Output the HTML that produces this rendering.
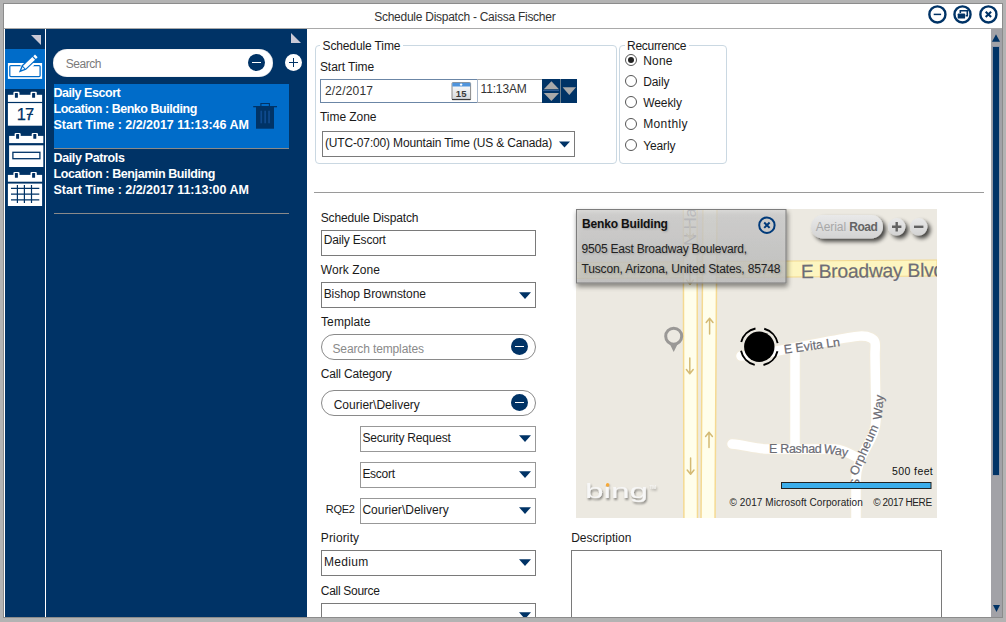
<!DOCTYPE html>
<html><head><meta charset="utf-8"><title>Schedule Dispatch</title>
<style>
html,body{margin:0;padding:0}
body{width:1006px;height:622px;position:relative;overflow:hidden;background:#b3b3b3;font-family:"Liberation Sans",sans-serif;font-size:12px}
.a{position:absolute;box-sizing:border-box}
.t{position:absolute;white-space:pre;line-height:normal;font-family:"Liberation Sans",sans-serif}
svg{position:absolute;overflow:visible}
.box{position:absolute;box-sizing:border-box;background:#fff;border:1px solid #7a7a7a}
.grp{position:absolute;box-sizing:border-box;border:1px solid #cad8e2;border-radius:4px}
.lg{position:absolute;background:#fff;height:3px}
.pill{position:absolute;box-sizing:border-box;background:#fff;border:1px solid #8a8a8a;border-radius:13px}
.radio{position:absolute;box-sizing:border-box;width:12px;height:12px;border:1px solid #555;border-radius:50%;background:#fff}

</style></head>
<body>
<!-- window frame -->
<div class="a" style="left:3px;top:3px;width:1000px;height:615px;background:#8c8c8c"></div>
<div class="a" style="left:4px;top:4px;width:998px;height:613px;background:#fff"></div>
<!-- title bar bottom line -->
<div class="a" style="left:4px;top:28px;width:998px;height:1px;background:#a9a9a9"></div>
<!-- sidebar -->
<div class="a" style="left:5px;top:29px;width:40px;height:588px;background:#003366"></div>
<div class="a" style="left:46px;top:29px;width:261px;height:588px;background:#003366"></div>
<div class="a" style="left:5px;top:49px;width:40px;height:40px;background:#006cc9"></div>
<svg style="left:0;top:0" width="320" height="230" viewBox="0 0 320 230">
  <polygon points="31,35 41,35 41,45" fill="#c9c9d6"/>
  <polygon points="291,33 291,43 301,43" fill="#c9c9d6"/>
</svg>
<!-- search -->
<div class="a" style="left:53px;top:49px;width:220px;height:28px;border-radius:14px;background:#fff;box-shadow:inset 0 0 1px #8890a0"></div>
<div class="a" style="left:248px;top:54px;width:17px;height:17px;border-radius:50%;background:#003366"></div>
<div class="a" style="left:252px;top:62px;width:9px;height:1px;background:#fff"></div>
<div class="a" style="left:285px;top:54px;width:17px;height:17px;border-radius:50%;background:#fff"></div>
<div class="a" style="left:289px;top:62px;width:9px;height:1px;background:#003366"></div>
<div class="a" style="left:293px;top:58px;width:1px;height:9px;background:#003366"></div>
<!-- list -->
<div class="a" style="left:54px;top:84px;width:235px;height:64px;background:#006cc9"></div>
<div class="a" style="left:54px;top:148px;width:235px;height:1px;background:#8a8a8a"></div>
<div class="a" style="left:54px;top:213px;width:235px;height:1px;background:#8a8a8a"></div>

<!-- group boxes -->
<div class="grp" style="left:315px;top:45px;width:302px;height:119px"></div>
<div class="lg" style="left:320px;top:44px;width:83px"></div>
<div class="grp" style="left:619px;top:45px;width:108px;height:119px"></div>
<div class="lg" style="left:625px;top:44px;width:64px"></div>
<!-- date/time -->
<div class="box" style="left:320px;top:79px;width:158px;height:24px;border-color:#6b86a6"></div>
<div class="a" style="left:477px;top:79px;width:66px;height:24px;background:#fff;border-top:1px solid #a5a5a5;border-bottom:1px solid #a5a5a5;border-left:1px solid #a9b8cc"></div>
<div class="a" style="left:542px;top:79px;width:18px;height:24px;background:#003366"></div>
<div class="a" style="left:561px;top:79px;width:16px;height:24px;background:#003366"></div>
<div class="a" style="left:560px;top:79px;width:1px;height:24px;background:#6b7f8f"></div>
<div class="a" style="left:543px;top:90px;width:16px;height:1px;background:#2d5a92"></div>

<!-- calendar icon -->
<svg style="left:451px;top:82px" width="20" height="19" viewBox="0 0 20 19">
  <defs><linearGradient id="cg" x1="0" y1="0" x2="0" y2="1"><stop offset="0" stop-color="#ffffff"/><stop offset="1" stop-color="#d4d8dc"/></linearGradient></defs>
  <rect x="1" y="0.6" width="18.6" height="17" rx="0.8" fill="url(#cg)" stroke="#8a8a8a" stroke-width="1"/>
  <rect x="1.3" y="0.8" width="18" height="3.7" fill="#4f94dc"/>
  <path d="M1,17.5 H19.6" stroke="#3a3a3a" stroke-width="1.2"/>
  <circle cx="10.1" cy="2.6" r="1.2" fill="#fff"/>
  <text x="10.2" y="15" font-family="Liberation Sans,sans-serif" font-size="9.5" font-weight="700" text-anchor="middle" fill="#3a3a3a" letter-spacing="0.2">15</text>
</svg>
<!-- timezone combo -->
<div class="box" style="left:322px;top:131px;width:253px;height:26px"></div>
<!-- radios -->
<div class="radio" style="left:625px;top:54px"></div><div class="a" style="left:628px;top:57px;width:6px;height:6px;border-radius:50%;background:#222"></div>
<div class="radio" style="left:625px;top:75px"></div>
<div class="radio" style="left:625px;top:96px"></div>
<div class="radio" style="left:625px;top:118px"></div>
<div class="radio" style="left:625px;top:139px"></div>
<!-- separator -->
<div class="a" style="left:314px;top:192px;width:670px;height:1px;background:#9a9a9a"></div>
<!-- form boxes -->
<div class="box" style="left:321px;top:230px;width:215px;height:26px"></div>
<div class="box" style="left:321px;top:282px;width:215px;height:26px"></div>
<div class="pill" style="left:321px;top:334px;width:215px;height:26px"></div>
<div class="a" style="left:511px;top:338px;width:17px;height:17px;border-radius:50%;background:#003366"></div>
<div class="a" style="left:515px;top:346px;width:9px;height:1px;background:#fff"></div>
<div class="pill" style="left:321px;top:390px;width:215px;height:26px"></div>
<div class="a" style="left:511px;top:394px;width:17px;height:17px;border-radius:50%;background:#003366"></div>
<div class="a" style="left:515px;top:402px;width:9px;height:1px;background:#fff"></div>
<div class="box" style="left:360px;top:426px;width:176px;height:26px;border-color:#989898"></div>
<div class="box" style="left:360px;top:462px;width:176px;height:26px;border-color:#989898"></div>
<div class="box" style="left:360px;top:498px;width:176px;height:26px;border-color:#989898"></div>
<div class="box" style="left:321px;top:550px;width:215px;height:26px"></div>
<div class="box" style="left:321px;top:603px;width:215px;height:26px"></div>
<div class="box" style="left:571px;top:550px;width:371px;height:80px"></div>
<svg style="left:0;top:0" width="1006" height="622" viewBox="0 0 1006 622">
  <defs>
    <clipPath id="mc"><rect x="576" y="209" width="361" height="309"/></clipPath>
    <linearGradient id="pg" x1="0" y1="0" x2="0" y2="1"><stop offset="0" stop-color="#e9e9e9"/><stop offset="1" stop-color="#d3d3d3"/></linearGradient>
    <filter id="ds" x="-30%" y="-30%" width="160%" height="180%"><feGaussianBlur in="SourceAlpha" stdDeviation="1.9"/><feOffset dx="2.5" dy="3"/><feComponentTransfer><feFuncA type="linear" slope="0.72"/></feComponentTransfer><feMerge><feMergeNode/><feMergeNode in="SourceGraphic"/></feMerge></filter>
    <linearGradient id="pp" x1="0" y1="0" x2="0" y2="1"><stop offset="0" stop-color="#d6d6d6"/><stop offset="1" stop-color="#c5c5c5"/></linearGradient>
    <filter id="ps" x="-10%" y="-20%" width="120%" height="150%"><feGaussianBlur in="SourceAlpha" stdDeviation="2.6"/><feOffset dx="0.5" dy="2.5"/><feComponentTransfer><feFuncA type="linear" slope="0.6"/></feComponentTransfer><feMerge><feMergeNode/><feMergeNode in="SourceGraphic"/></feMerge></filter>
    <filter id="bs" x="-20%" y="-30%" width="140%" height="170%"><feGaussianBlur in="SourceAlpha" stdDeviation="1.2"/><feOffset dx="1" dy="1.5"/><feComponentTransfer><feFuncA type="linear" slope="0.45"/></feComponentTransfer><feMerge><feMergeNode/><feMergeNode in="SourceGraphic"/></feMerge></filter>
  </defs>
  <g clip-path="url(#mc)">
    <rect x="576" y="209" width="361" height="309" fill="#ece9e1"/>
    <!-- white residential roads (casing then fill) -->
    <g fill="none" stroke-linecap="round" stroke-linejoin="round">
      <g stroke="#f1ebdc" stroke-width="11.5">
        <path d="M741,356 C770,353 800,347 830,341 S865,335 871,338 S875,345 875,355 L876,420 C876,440 856,455 856,480 L856,525"/>
        <path d="M795,350 L795,446"/>
        <path d="M732,444 C745,445 755,449 768,449 L835,449 C845,450 850,454 858,458"/>
      </g>
      <g stroke="#ffffff" stroke-width="9.5">
        <path d="M741,356 C770,353 800,347 830,341 S865,335 871,338 S875,345 875,355 L876,420 C876,440 856,455 856,480 L856,525"/>
        <path d="M795,350 L795,446"/>
        <path d="M732,444 C745,445 755,449 768,449 L835,449 C845,450 850,454 858,458"/>
      </g>
    </g>
    <!-- Broadway -->
    <polygon points="576,262.5 937,260 937,276 576,278.5" fill="#fdf5c0" stroke="#f2d88e" stroke-width="1"/>
    <!-- N Harrison lanes -->
    <polygon points="683.3,205 697.1,205 697.5,522 683.9,522" fill="#fffeeb" stroke="#f5da92" stroke-width="1.5"/>
    <polygon points="702.9,205 717,205 715,522 701,522" fill="#fffeeb" stroke="#f5da92" stroke-width="1.5"/>
    <text transform="translate(696.4,246) rotate(-90)" font-family="Liberation Sans, sans-serif" font-size="17" fill="#74747f" letter-spacing="-0.3">N Harrison Rd</text>
    <!-- lane arrows -->
    <g stroke="#d4ba74" stroke-width="1.5" fill="none" stroke-linecap="round" stroke-linejoin="round">
      <path d="M709.6,334 V318.5 M706.2,322.5 L709.6,318.2 L713,322.5"/>
      <path d="M709,447.5 V432.5 M705.6,436.5 L709,432.2 L712.4,436.5"/>
      <path d="M689.8,358 V373.5 M686.4,369.5 L689.8,373.8 L693.2,369.5"/>
      <path d="M690.6,458 V474 M687.2,470 L690.6,474.3 L694,470"/>
      <path d="M690,268 V284 M686.6,280 L690,284.3 L693.4,280"/>
      <path d="M690,224 V238 M686.6,234 L690,238.3 L693.4,234"/>
    </g>
    <!-- road labels -->
    <g font-family="Liberation Sans, sans-serif" fill="#6c6c74" stroke="#6c6c74" stroke-width="0.2">
      <text transform="translate(801,278.2) rotate(-0.7)" font-size="19.3" fill="#6d6d78" letter-spacing="-0.25">E Broadway Blvd</text>
      <text transform="translate(784.5,353.8) rotate(-8)" font-size="12.5" letter-spacing="-0.05">E Evita Ln</text>
      <text transform="translate(769,453)" font-size="12.5" letter-spacing="-0.3">E Rashad</text>
      <text transform="translate(823.3,452.8) rotate(9)" font-size="12.5" letter-spacing="-0.1">Way</text>
      <text transform="translate(858.8,487.5) rotate(-84)" font-size="12.5">S</text>
      <text transform="translate(856.9,476.2) rotate(-66.3)" font-size="12.5" letter-spacing="0.3">Orpheum</text>
      <text transform="translate(881.6,420) rotate(-85)" font-size="12.5" letter-spacing="0.1">Way</text>
    </g>
    <!-- pin -->
    <g>
      <circle cx="673.7" cy="336.2" r="8" fill="none" stroke="#9a9896" stroke-width="3"/>
      <polygon points="670,344.6 677.4,344.6 673.7,352" fill="#9a9896"/>
    </g>
    <!-- target -->
    <circle cx="759.3" cy="346.8" r="15.2" fill="#000"/>
    <circle cx="759.3" cy="346.8" r="18.7" fill="none" stroke="#000" stroke-width="1.9" stroke-dasharray="20.4 8.97" stroke-dashoffset="-4.5"/>
    <!-- scale -->
    <rect x="781.5" y="482.5" width="149.5" height="6" fill="#3badea" stroke="#222" stroke-width="1"/>
    <!-- bing logo -->
    <g filter="url(#bs)">
      <text x="585" y="497.8" font-family="Liberation Sans, sans-serif" font-size="20" fill="#f7f7f7" textLength="63" lengthAdjust="spacingAndGlyphs">bing</text>
      <text x="649.5" y="489.3" font-family="Liberation Sans, sans-serif" font-size="4.5" fill="#f7f7f7">TM</text>
    </g>
    <circle cx="607.6" cy="484.9" r="1.8" fill="#f6a938"/>
  </g>
  <!-- Aerial / Road control -->
  <g filter="url(#ds)">
    <rect x="811" y="215" width="72" height="23.5" rx="11.7" fill="url(#pg)"/>
    <circle cx="896.7" cy="226.8" r="8.7" fill="url(#pg)"/>
    <circle cx="918.7" cy="226.8" r="8.7" fill="url(#pg)"/>
  </g>
  <g stroke="#626262" stroke-width="2.4" fill="none">
    <path d="M892,226.8 H901.4 M896.7,222.1 V231.5"/>
    <path d="M914,226.8 H923.4"/>
  </g>
  <!-- popup -->
  <g filter="url(#ps)">
    <rect x="576.5" y="209.5" width="209.5" height="73.5" fill="url(#pp)" fill-opacity="0.72" stroke="#7d7d7d" stroke-width="1"/>
  </g>
  <circle cx="766.9" cy="225.2" r="7.7" fill="none" stroke="#003a7a" stroke-width="2"/>
  <path d="M764.2,222.5 L769.6,227.9 M769.6,222.5 L764.2,227.9" stroke="#003a7a" stroke-width="2" fill="none"/>
</svg>


<!-- scrollbar -->
<div class="a" style="left:991px;top:29px;width:11px;height:588px;background:#a2a2a7"></div>
<svg style="left:0;top:0" width="1006" height="622" viewBox="0 0 1006 622">
  <!-- title buttons -->
  <g fill="none" stroke="#003366">
    <circle cx="937.4" cy="14.4" r="8.05" stroke-width="2.4"/>
    <path d="M933.7,14.4 H941.1" stroke-width="1.5"/>
    <circle cx="962.5" cy="14.4" r="8.05" stroke-width="2.4"/>
    <path d="M960.3,12.9 V10.8 H967.3 V15.8 H965.6" stroke-width="1.6"/>
    <rect x="957.7" y="13.6" width="7.4" height="5" rx="0.7" fill="#003366" stroke="none"/>
    <circle cx="988.4" cy="14.4" r="8.05" stroke-width="2.4"/>
    <path d="M985.7,11.8 L991.1,17.1 M991.1,11.8 L985.7,17.1" stroke-width="2.1"/>
  </g>
  <!-- edit icon -->
  <clipPath id="ec"><rect x="7.9" y="63" width="34.2" height="15.9"/></clipPath>
  <rect x="7.9" y="63" width="34.2" height="15.9" fill="#fff"/>
  <rect x="9.8" y="65.5" width="30.3" height="11.1" rx="1" fill="none" stroke="#006cc9" stroke-width="1.25"/>
  <g clip-path="url(#ec)"><g transform="translate(19.6,71.7) rotate(-43.4)"><rect x="5" y="-5.3" width="10" height="10.6" fill="#fff"/></g></g>
  <g transform="translate(19.6,71.7) rotate(-43.4)">
    <path d="M-1,0 L6,-3.1 H23.8 V3.1 H6 Z" fill="#006cc9"/>
    <path d="M6.4,-1.9 H19.4 V1.9 H6.4 Z" fill="#fff"/>
    <path d="M2.4,0 L5.4,-1.35 V1.35 Z" fill="#fff"/>
    <path d="M20.6,-1.9 H23 V1.9 H20.6 Z" fill="#fff"/>
  </g>
  <!-- calendar 17 -->
  <g transform="translate(7.9,94.8)">
    <g fill="#fff"><rect x="0" y="0" width="34.2" height="7.1"/><rect x="0" y="8.3" width="34.2" height="22.6"/>
    <rect x="5.5" y="-3" width="6.1" height="5" rx="1.2"/><rect x="22.6" y="-3" width="6.3" height="5" rx="1.2"/></g>
    <g fill="#002f63"><rect x="7" y="-1.8" width="3" height="4.7" rx="0.5"/><rect x="24.2" y="-1.8" width="3" height="4.7" rx="0.5"/></g>
  </g>
  <text x="25" y="120.3" text-anchor="middle" font-family="Liberation Sans, sans-serif" font-size="16.5" fill="#003366" stroke="#003366" stroke-width="0.25" letter-spacing="-1">17</text>
  <path d="M26.8,114.4 H33.2" stroke="#003366" stroke-width="1.1" />
  <!-- calendar week -->
  <g transform="translate(9.1,135.9)">
    <g fill="#fff"><rect x="0" y="0" width="34.2" height="7.2"/><rect x="0" y="9.4" width="34.2" height="21.7"/>
    <rect x="5.5" y="-3" width="6.1" height="5" rx="1.2"/><rect x="22.6" y="-3" width="6.3" height="5" rx="1.2"/></g>
    <g fill="#002f63"><rect x="7" y="-1.8" width="3" height="4.7" rx="0.5"/><rect x="24.2" y="-1.8" width="3" height="4.7" rx="0.5"/></g>
  </g>
  <rect x="12.9" y="152.3" width="27" height="6.4" fill="#fff" stroke="#003366" stroke-width="1.3"/>
  <!-- calendar month -->
  <g transform="translate(7.9,174.9)">
    <g fill="#fff"><rect x="0" y="0" width="34.2" height="6.8"/><rect x="0" y="8.7" width="34.2" height="22.4"/>
    <rect x="5.5" y="-3" width="6.1" height="5" rx="1.2"/><rect x="22.6" y="-3" width="6.3" height="5" rx="1.2"/></g>
    <g fill="#002f63"><rect x="7" y="-1.8" width="3" height="4.7" rx="0.5"/><rect x="24.2" y="-1.8" width="3" height="4.7" rx="0.5"/></g>
  </g>
  <g stroke="#003366" stroke-width="1.2">
    <path d="M11,188.3 H39.3 M11,194.1 H39.3 M11,199.9 H39.3"/>
    <path d="M17.4,185 V203 M24.4,185 V203 M31.5,185 V203"/>
  </g>
  <!-- trash -->
  <g fill="#003366">
    <rect x="253.2" y="106" width="23.8" height="1.3"/>
    <rect x="256" y="107" width="18" height="21.7"/>
  </g>
  <path d="M260.9,106 V103.5 H269.4 V106" fill="none" stroke="#003366" stroke-width="1.1"/>
  <g fill="#0f4a8e"><rect x="260.4" y="110.7" width="1.7" height="12.6"/><rect x="264.3" y="110.7" width="1.7" height="12.6"/><rect x="268.2" y="110.7" width="1.7" height="12.6"/></g>
  <!-- scrollbar arrows / thumb -->
  <polygon points="992,41.8 1000,41.8 996,34.3" fill="#003366"/>
  <polygon points="993,605 1000,605 996.5,612" fill="#003366"/>
  <rect x="992.5" y="46.5" width="7" height="28.5" fill="#8d95a5"/>
  <rect x="993" y="47" width="6" height="428" fill="#003366"/>
  <rect x="992.6" y="46.6" width="6.8" height="428.8" fill="none" stroke="#8b93a6" stroke-width="0.6"/>
</svg>

<svg style="left:0;top:0" width="1006" height="622" viewBox="0 0 1006 622">
  <polygon points="543.8,89.3 559,89.3 551.4,81.3" fill="#a9a9a9"/>
  <polygon points="543.8,93 559,93 551.4,101" fill="#a9a9a9"/>
  <polygon points="562.6,87.2 576,87.2 569.3,95" fill="#a9a9a9"/>
  <g fill="#003366">
  <polygon points="559,141.4 570,141.4 564.5,147.6"/>
  <polygon points="519,292.2 531,292.2 525,299"/>
  <polygon points="519,435.2 531,435.2 525,442"/>
  <polygon points="519,471.2 531,471.2 525,478"/>
  <polygon points="519,507.2 531,507.2 525,514"/>
  <polygon points="519,559.2 531,559.2 525,566"/>
  <polygon points="519,612.2 531,612.2 525,619"/>
  </g>
</svg>

<!-- bottom frame cover -->
<div class="a" style="left:3px;top:617px;width:1000px;height:1px;background:#8c8c8c"></div>
<div class="a" style="left:0;top:618px;width:1006px;height:4px;background:#b3b3b3"></div>
<div class="a" style="left:1002px;top:3px;width:1px;height:615px;background:#8c8c8c"></div>

<!-- text -->
<span class="t" style="left:374.2px;top:10.0px;font-size:12px;font-weight:400;color:#333;letter-spacing:-0.26px;">Schedule Dispatch - Caissa Fischer</span>
<span class="t" style="left:65.8px;top:57.0px;font-size:12px;font-weight:400;color:#7a7a7a;letter-spacing:-0.47px;">Search</span>
<span class="t" style="left:53.5px;top:86.0px;font-size:12.5px;font-weight:700;color:#fff;letter-spacing:-0.46px;">Daily Escort</span>
<span class="t" style="left:53.5px;top:102.0px;font-size:12.5px;font-weight:700;color:#fff;letter-spacing:-0.46px;">Location : Benko Building</span>
<span class="t" style="left:53.5px;top:118.0px;font-size:12.5px;font-weight:700;color:#fff;letter-spacing:-0.02px;">Start Time : 2/2/2017 11:13:46 AM</span>
<span class="t" style="left:53.5px;top:151.0px;font-size:12.5px;font-weight:700;color:#fff;letter-spacing:-0.36px;">Daily Patrols</span>
<span class="t" style="left:53.5px;top:167.0px;font-size:12.5px;font-weight:700;color:#fff;letter-spacing:-0.41px;">Location : Benjamin Building</span>
<span class="t" style="left:53.5px;top:183.0px;font-size:12.5px;font-weight:700;color:#fff;letter-spacing:-0.02px;">Start Time : 2/2/2017 11:13:00 AM</span>
<span class="t" style="left:322.5px;top:39.0px;font-size:12px;font-weight:400;color:#1a1a1a;letter-spacing:-0.12px;">Schedule Time</span>
<span class="t" style="left:319.9px;top:60.0px;font-size:12px;font-weight:400;color:#1a1a1a;letter-spacing:-0.05px;">Start Time</span>
<span class="t" style="left:325.0px;top:84.0px;font-size:12px;font-weight:400;color:#333;letter-spacing:0.18px;">2/2/2017</span>
<span class="t" style="left:480.5px;top:82.0px;font-size:12px;font-weight:400;color:#333;letter-spacing:-0.14px;">11:13AM</span>
<span class="t" style="left:320.0px;top:110.0px;font-size:12px;font-weight:400;color:#1a1a1a;letter-spacing:-0.05px;">Time Zone</span>
<span class="t" style="left:325.0px;top:136.0px;font-size:12px;font-weight:400;color:#1a1a1a;letter-spacing:-0.16px;">(UTC-07:00) Mountain Time (US &amp; Canada)</span>
<span class="t" style="left:627.0px;top:39.0px;font-size:12px;font-weight:400;color:#1a1a1a;letter-spacing:-0.28px;">Recurrence</span>
<span class="t" style="left:643.2px;top:54.0px;font-size:12px;font-weight:400;color:#1a1a1a;letter-spacing:0.2px;">None</span>
<span class="t" style="left:643.2px;top:75.0px;font-size:12px;font-weight:400;color:#1a1a1a;letter-spacing:-0.09px;">Daily</span>
<span class="t" style="left:643.2px;top:96.0px;font-size:12px;font-weight:400;color:#1a1a1a;letter-spacing:-0.07px;">Weekly</span>
<span class="t" style="left:643.2px;top:117.0px;font-size:12px;font-weight:400;color:#1a1a1a;letter-spacing:0.38px;">Monthly</span>
<span class="t" style="left:643.2px;top:139.0px;font-size:12px;font-weight:400;color:#1a1a1a;letter-spacing:-0.12px;">Yearly</span>
<span class="t" style="left:320.7px;top:211.0px;font-size:12px;font-weight:400;color:#1a1a1a;letter-spacing:-0.14px;">Schedule Dispatch</span>
<span class="t" style="left:323.7px;top:233.0px;font-size:12px;font-weight:400;color:#1a1a1a;letter-spacing:-0.16px;">Daily Escort</span>
<span class="t" style="left:320.7px;top:263.0px;font-size:12px;font-weight:400;color:#1a1a1a;letter-spacing:0.1px;">Work Zone</span>
<span class="t" style="left:323.7px;top:287.0px;font-size:12px;font-weight:400;color:#1a1a1a;letter-spacing:-0.07px;">Bishop Brownstone</span>
<span class="t" style="left:321.0px;top:315.0px;font-size:12px;font-weight:400;color:#1a1a1a;letter-spacing:0.11px;">Template</span>
<span class="t" style="left:332.5px;top:342.0px;font-size:12px;font-weight:400;color:#8a8a8a;letter-spacing:-0.13px;">Search templates</span>
<span class="t" style="left:320.8px;top:367.0px;font-size:12px;font-weight:400;color:#1a1a1a;letter-spacing:-0.15px;">Call Category</span>
<span class="t" style="left:333.7px;top:398.0px;font-size:12px;font-weight:400;color:#1a1a1a;letter-spacing:0.01px;">Courier\Delivery</span>
<span class="t" style="left:362.4px;top:431.0px;font-size:12px;font-weight:400;color:#1a1a1a;letter-spacing:-0.19px;">Security Request</span>
<span class="t" style="left:362.4px;top:467.0px;font-size:12px;font-weight:400;color:#1a1a1a;letter-spacing:-0.28px;">Escort</span>
<span class="t" style="left:325.8px;top:503.0px;font-size:11px;font-weight:400;color:#1a1a1a;letter-spacing:-0.26px;">RQE2</span>
<span class="t" style="left:362.4px;top:503.0px;font-size:12px;font-weight:400;color:#1a1a1a;letter-spacing:0.02px;">Courier\Delivery</span>
<span class="t" style="left:320.8px;top:531.0px;font-size:12px;font-weight:400;color:#1a1a1a;letter-spacing:0.14px;">Priority</span>
<span class="t" style="left:324.0px;top:555.0px;font-size:12px;font-weight:400;color:#1a1a1a;letter-spacing:0.3px;">Medium</span>
<span class="t" style="left:320.8px;top:584.0px;font-size:12px;font-weight:400;color:#1a1a1a;letter-spacing:-0.3px;">Call Source</span>
<span class="t" style="left:571.2px;top:531.0px;font-size:12px;font-weight:400;color:#1a1a1a;letter-spacing:0.02px;">Description</span>
<span class="t" style="left:582.0px;top:217.0px;font-size:12px;font-weight:700;color:#111;letter-spacing:-0.16px;text-shadow:1px 1px 2px rgba(110,110,110,.45);">Benko Building</span>
<span class="t" style="left:581.5px;top:242.0px;font-size:12px;font-weight:400;color:#222;letter-spacing:-0.21px;text-shadow:1px 1px 2px rgba(110,110,110,.45);">9505 East Broadway Boulevard,</span>
<span class="t" style="left:581.5px;top:262.0px;font-size:12px;font-weight:400;color:#222;letter-spacing:-0.15px;text-shadow:1px 1px 2px rgba(110,110,110,.45);">Tuscon, Arizona, United States, 85748</span>
<span class="t" style="left:815.8px;top:220.0px;font-size:12px;font-weight:400;color:#a8a8a8;letter-spacing:-0.08px;">Aerial</span>
<span class="t" style="left:849.2px;top:220.0px;font-size:12px;font-weight:700;color:#646464;letter-spacing:-0.47px;">Road</span>
<span class="t" style="left:892.1px;top:465.0px;font-size:10.5px;font-weight:400;color:#111;letter-spacing:0.39px;">500 feet</span>
<span class="t" style="left:729.5px;top:497.0px;font-size:10px;font-weight:400;color:#222;letter-spacing:0.09px;">© 2017 Microsoft Corporation</span>
<span class="t" style="left:873.3px;top:497.0px;font-size:10px;font-weight:400;color:#222;letter-spacing:-0.42px;">© 2017 HERE</span>
</body></html>
